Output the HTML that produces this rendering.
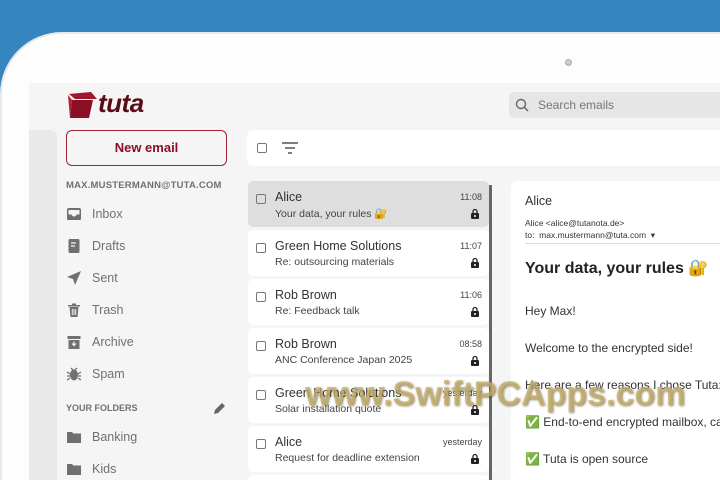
<!DOCTYPE html>
<html><head><meta charset="utf-8"><style>
*{margin:0;padding:0;box-sizing:border-box}
html,body{width:720px;height:480px;overflow:hidden}
body{background:#3585c0;font-family:"Liberation Sans","DejaVu Sans",sans-serif;position:relative}
.frame{position:absolute;left:0;top:32px;width:720px;height:448px;background:#fdfdfd;border-radius:62px 0 0 0;border:2px solid #e6e8ec;border-right:none;border-bottom:none}
.screen{position:absolute;left:29px;top:83px;width:691px;height:397px;background:#f5f5f5}
.abs{position:absolute}
.strip{left:29px;top:130px;width:28px;height:350px;background:#e9e9e9;border-radius:0 6px 0 0}
.btn{left:66px;top:130px;width:161px;height:36px;border:1.5px solid #a0243a;border-radius:6px;color:#8a0f24;font-weight:bold;font-size:13px;text-align:center;line-height:33px}
.acct{left:66px;top:180px;font-size:9.5px;font-weight:bold;color:#707070;letter-spacing:.2px}
.nav{left:66px;font-size:12.5px;color:#707070;display:flex;align-items:center}
.nav svg{width:16px;height:16px;margin-right:10px}
.tool{left:247px;top:130px;width:473px;height:36px;background:#fff;border-radius:6px 0 0 6px}
.item{left:248px;width:241px;height:46px;background:#fff;border-radius:5px}
.item.sel{background:#dedede}
.cb{position:absolute;left:8px;top:13px;width:10px;height:10px;border:1.3px solid #777;border-radius:2px}
.from{position:absolute;left:27px;top:9px;font-size:12.5px;color:#333}
.subj{position:absolute;left:27px;top:26px;font-size:10.5px;color:#444}
.time{position:absolute;right:7px;top:11px;font-size:9px;color:#444}
.lock{position:absolute;right:9px;top:27px;width:10px;height:11px}
.reader{left:511px;top:181px;width:209px;height:299px;background:#fff;border-radius:6px 0 0 0;overflow:hidden}
.r{position:absolute;left:14px;color:#333}
.search{left:509px;top:92px;width:211px;height:26px;background:#e6e6e6;border-radius:5px 0 0 5px;font-size:12px;color:#777}
</style></head><body>
<svg width="0" height="0" style="position:absolute"><defs><symbol id="lk" viewBox="0 0 10 11"><path d="M3 5V3.5a2 2 0 014 0V5" stroke="#222" stroke-width="1.3" fill="none"/><rect x="1" y="5" width="8" height="6" rx="1" fill="#222"/><circle cx="5" cy="8" r="1" fill="#fff"/></symbol></defs></svg>
<div class="frame"></div>
<div class="abs" style="left:565px;top:59px;width:7px;height:7px;border-radius:50%;background:#c8ccd6;border:1px solid #aab"></div>
<div class="screen"></div>
<div class="abs strip"></div>
<svg class="abs" style="left:67px;top:90px" width="30" height="30" viewBox="0 0 30 30"><path d="M2 4 L24 2 L30 9 L8 9 Z" fill="#a0162c"/><path d="M5 10 L26 10 L22 28 L3 28 Z" fill="#8a0f24"/><path d="M1 5 L5 10 L3 28 Z" fill="#b02036"/></svg>
<div class="abs" style="left:98px;top:88px;font-size:26px;font-style:italic;font-weight:bold;color:#5a0d18;letter-spacing:-0.5px">tuta</div>
<div class="abs search"><svg style="position:absolute;left:6px;top:6px" width="14" height="14" viewBox="0 0 14 14"><circle cx="6" cy="6" r="4.5" fill="none" stroke="#666" stroke-width="1.4"/><path d="M9.5 9.5 L13 13" stroke="#666" stroke-width="1.5"/></svg><span style="position:absolute;left:29px;top:6px">Search emails</span></div>
<div class="abs btn">New email</div>
<div class="abs acct">MAX.MUSTERMANN@TUTA.COM</div>
<div class="abs nav" style="top:206px"><svg viewBox="0 0 16 16"><path d="M1 4a2 2 0 012-2h10a2 2 0 012 2v9a1 1 0 01-1 1H2a1 1 0 01-1-1zM2.5 8.5h3a2.5 2 0 005 0h3V4h-11z" fill="#707070"/></svg>Inbox</div>
<div class="abs nav" style="top:238px"><svg viewBox="0 0 16 16"><rect x="2.5" y="1" width="11" height="14" rx="1.5" fill="#707070"/><path d="M5 5h5M5 8h4" stroke="#f5f5f5" stroke-width="1.3"/></svg>Drafts</div>
<div class="abs nav" style="top:270px"><svg viewBox="0 0 16 16"><path d="M15 1 L1 7 L7 9 L9 15 Z" fill="#707070"/></svg>Sent</div>
<div class="abs nav" style="top:302px"><svg viewBox="0 0 16 16"><path d="M2 3h12v1.5H2zM6 1.5h4v1.5H6zM3.5 5h9l-1 10h-7z" fill="#707070"/><path d="M6.3 7v6M8 7v6M9.7 7v6" stroke="#f5f5f5" stroke-width=".9"/></svg>Trash</div>
<div class="abs nav" style="top:334px"><svg viewBox="0 0 16 16"><rect x="1.5" y="2" width="13" height="3" fill="#707070"/><rect x="2.5" y="6" width="11" height="9" fill="#707070"/><path d="M8 7.5v4M6 9.5l2 2 2-2" stroke="#f5f5f5" stroke-width="1.2" fill="none"/></svg>Archive</div>
<div class="abs nav" style="top:366px"><svg viewBox="0 0 16 16"><ellipse cx="8" cy="9" rx="4" ry="5.5" fill="#707070"/><path d="M1 6l3 2M15 6l-3 2M1 10h3M15 10h-3M1 14l3-2M15 14l-3-2M5 2l2 2M11 2l-2 2" stroke="#707070" stroke-width="1.3"/></svg>Spam</div>
<div class="abs" style="left:66px;top:403px;font-size:9px;font-weight:bold;color:#707070">YOUR FOLDERS</div>
<svg class="abs" style="left:213px;top:401px" width="14" height="14" viewBox="0 0 14 14"><path d="M1 13l1-4 7-7 3 3-7 7z" fill="#666"/></svg>
<div class="abs nav" style="top:429px"><svg viewBox="0 0 16 16"><path d="M1 3h5l1.5 1.5H15V14H1z" fill="#707070"/></svg>Banking</div>
<div class="abs nav" style="top:461px"><svg viewBox="0 0 16 16"><path d="M1 3h5l1.5 1.5H15V14H1z" fill="#707070"/></svg>Kids</div>
<div class="abs tool"><div style="position:absolute;left:10px;top:13px;width:10px;height:10px;border:1.3px solid #777;border-radius:2px"></div><svg style="position:absolute;left:35px;top:12px" width="16" height="12" viewBox="0 0 16 12"><path d="M0 1h16M3 6h10M6 11h4" stroke="#555" stroke-width="1.5"/></svg></div>
<div class="abs item sel" style="top:181px"><div class="cb"></div><div class="from">Alice</div><div class="subj">Your data, your rules 🔐</div><div class="time">11:08</div><svg class="lock"><use href="#lk"/></svg></div>
<div class="abs item" style="top:230px"><div class="cb"></div><div class="from">Green Home Solutions</div><div class="subj">Re: outsourcing materials</div><div class="time">11:07</div><svg class="lock"><use href="#lk"/></svg></div>
<div class="abs item" style="top:279px"><div class="cb"></div><div class="from">Rob Brown</div><div class="subj">Re: Feedback talk</div><div class="time">11:06</div><svg class="lock"><use href="#lk"/></svg></div>
<div class="abs item" style="top:328px"><div class="cb"></div><div class="from">Rob Brown</div><div class="subj">ANC Conference Japan 2025</div><div class="time">08:58</div><svg class="lock"><use href="#lk"/></svg></div>
<div class="abs item" style="top:377px"><div class="cb"></div><div class="from">Green Home Solutions</div><div class="subj">Solar installation quote</div><div class="time">yesterday</div><svg class="lock"><use href="#lk"/></svg></div>
<div class="abs item" style="top:426px"><div class="cb"></div><div class="from">Alice</div><div class="subj">Request for deadline extension</div><div class="time">yesterday</div><svg class="lock"><use href="#lk"/></svg></div>
<div class="abs item" style="top:475px;height:5px;border-radius:5px 5px 0 0"></div>
<div class="abs" style="left:489px;top:185px;width:3px;height:295px;background:#666"></div>
<div class="abs reader">
<div class="r" style="top:13px;font-size:12.5px">Alice</div>
<div class="r" style="top:37px;font-size:8.5px">Alice &lt;alice@tutanota.de&gt;</div>
<div class="r" style="top:49px;font-size:8.5px">to:&nbsp; max.mustermann@tuta.com &nbsp;▾</div>
<div class="abs" style="left:14px;top:62px;width:200px;height:1px;background:#ddd"></div>
<div class="r" style="top:77px;font-size:16px;font-weight:bold;color:#222;white-space:nowrap">Your data, your rules 🔐</div>
<div class="r" style="top:123px;font-size:12px">Hey Max!</div>
<div class="r" style="top:160px;font-size:12px;white-space:nowrap">Welcome to the encrypted side!</div>
<div class="r" style="top:197px;font-size:12px;white-space:nowrap">Here are a few reasons I chose Tuta:</div>
<div class="r" style="top:234px;font-size:12px;white-space:nowrap">✅ End-to-end encrypted mailbox, cal</div>
<div class="r" style="top:271px;font-size:12px;white-space:nowrap">✅ Tuta is open source</div>
</div>
<div class="abs" style="left:305px;top:375px;font-size:34px;font-weight:bold;color:rgba(200,180,110,.75);text-shadow:1px 1px 2px rgba(80,60,20,.6);white-space:nowrap">www.SwiftPCApps.com</div>
</body></html>
